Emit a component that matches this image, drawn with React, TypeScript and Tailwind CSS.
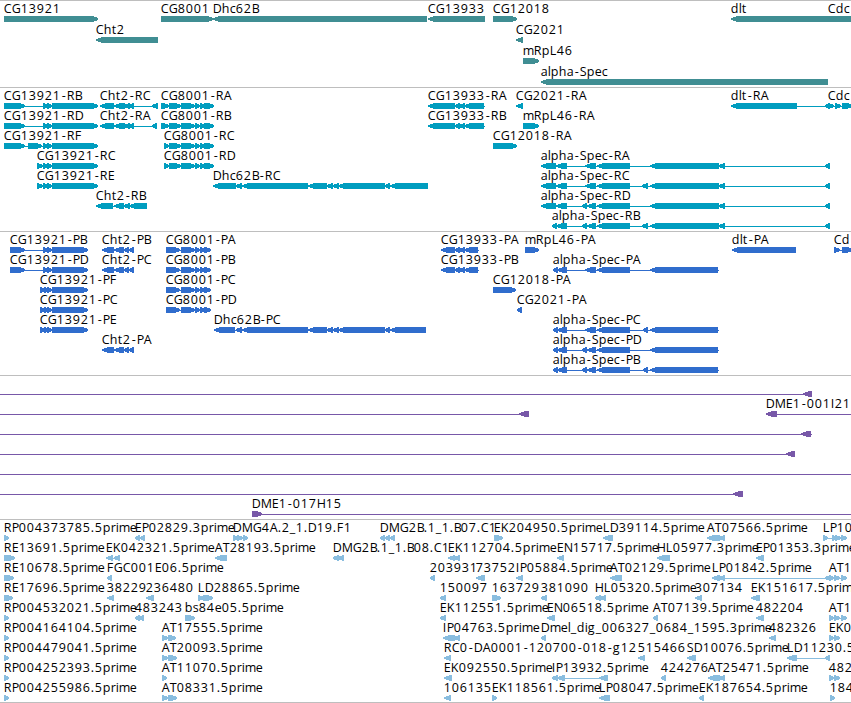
type Span = [number, number]

interface Feature {
    row: number
    x: number
    label: string
    dir: 1 | -1
    spans: Span[]
    // connector line, when it runs past the outer spans
    line?: Span
}

interface TrackData {
    name: string
    color: string
    rowHeight: number
    height: number
    features: Feature[]
}

const WIDTH = 851

// Label advances in px, digits are 8 wide
const ADVANCE: Record<string, number> = {
    A: 8, B: 7, C: 8, D: 9, E: 7, F: 7, G: 9, H: 9, I: 4, K: 8, L: 7, M: 11, N: 9, P: 7, R: 8, S: 7, T: 7,
    a: 7, b: 8, c: 6, d: 8, e: 7, g: 8, h: 8, i: 3, l: 3, m: 11, o: 7, p: 8, r: 5, s: 6, t: 5,
    '.': 4, '-': 6, _: 6
}

const f = (row: number, x: number, label: string, dir: 1 | -1, spans: Span[], line?: Span): Feature => ({
    row,
    x,
    label,
    dir,
    spans,
    line
})

const genes: Feature[] = [
    f(0, 4, 'CG13921', 1, [[4, 98]]),
    f(0, 161, 'CG8001', 1, [[161, 213]]),
    f(0, 213, 'Dhc62B', -1, [[213, 427]]),
    f(0, 428, 'CG13933', -1, [[428, 485]]),
    f(0, 493, 'CG12018', 1, [[493, 517]]),
    f(0, 731, 'dlt', -1, [[731, 829]]),
    f(0, 828, 'Cdc', 1, [[828, 870]]),
    f(1, 96, 'Cht2', -1, [[96, 158]]),
    f(1, 516, 'CG2021', -1, [[516, 523]]),
    f(2, 523, 'mRpL46', 1, [[523, 539]]),
    f(3, 541, 'alpha-Spec', -1, [[541, 828]])
]

const cg13921: Span[] = [[43, 48], [47, 52], [52, 98]]
const cg13921Short: Span[] = [[37, 43], ...cg13921]
const cht2: Span[] = [[100, 114], [114, 125], [124, 130], [129, 134]]
const cg8001: Span[] = [[169, 181], [181, 195], [195, 200], [200, 205], [204, 214]]
const cg13933: Span[] = [[428, 455], [455, 460], [459, 465], [464, 484]]
const dhcMid: Span[] = [[236, 242], [242, 308], [308, 327], [327, 333], [332, 339], [338, 385], [385, 390]]
const specTail: Span[] = [[650, 719], [719, 725], [825, 830]]

const transcripts: Feature[] = [
    f(0, 4, 'CG13921-RB', 1, [[4, 25], ...cg13921]),
    f(0, 100, 'Cht2-RC', -1, [...cht2, [152, 158]]),
    f(0, 161, 'CG8001-RA', 1, [[161, 169], ...cg8001]),
    f(0, 428, 'CG13933-RA', -1, cg13933, [428, 485]),
    f(0, 516, 'CG2021-RA', -1, [[516, 523]]),
    f(0, 731, 'dlt-RA', -1, [[731, 797], [825, 830]]),
    f(0, 828, 'Cdc', 1, [[828, 834], [835, 841], [842, 853]]),
    f(1, 4, 'CG13921-RD', 1, [[4, 25], ...cg13921]),
    f(1, 100, 'Cht2-RA', -1, [...cht2, [152, 157]]),
    f(1, 161, 'CG8001-RB', 1, [[161, 169], ...cg8001]),
    f(1, 428, 'CG13933-RB', -1, cg13933, [428, 485]),
    f(1, 523, 'mRpL46-RA', 1, [[523, 539]]),
    f(2, 4, 'CG13921-RF', 1, [[4, 25], [28, 42], ...cg13921]),
    f(2, 164, 'CG8001-RC', 1, [[164, 169], ...cg8001]),
    f(2, 493, 'CG12018-RA', 1, [[493, 517]]),
    f(3, 37, 'CG13921-RC', 1, cg13921Short),
    f(3, 164, 'CG8001-RD', 1, [[164, 169], ...cg8001]),
    f(3, 541, 'alpha-Spec-RA', -1, [[541, 556], [556, 567], [585, 596], [597, 630], ...specTail]),
    f(4, 37, 'CG13921-RE', 1, cg13921Short),
    f(4, 213, 'Dhc62B-RC', -1, [[213, 236], ...dhcMid, [390, 428]]),
    f(4, 541, 'alpha-Spec-RC', -1, [[541, 556], [556, 567], [585, 596], [597, 630], [642, 648], ...specTail]),
    f(5, 96, 'Cht2-RB', -1, [[96, 113], [114, 124], [124, 130], [129, 147]]),
    f(5, 541, 'alpha-Spec-RD', -1, [[541, 556], [556, 567], [582, 587], [587, 596], [597, 630], ...specTail]),
    f(6, 552, 'alpha-Spec-RB', -1, [[552, 557], [556, 567], [582, 587], [587, 596], [597, 630], [642, 648], ...specTail])
]

const p13921: Span[] = [[43, 48], [47, 52], [52, 88]]
const p13921Short: Span[] = [[40, 45], [44, 48], [47, 52], [52, 88]]
const pCht2: Span[] = [[102, 114], [114, 124], [124, 129], [129, 134]]
const p8001: Span[] = [[166, 180], [181, 195], [195, 200], [200, 205], [204, 211]]
const p13933: Span[] = [[441, 455], [455, 460], [459, 465], [464, 478]]
const specHead: Span[] = [[553, 558], [557, 567]]

const proteins: Feature[] = [
    f(0, 10, 'CG13921-PB', 1, [[10, 25], ...p13921]),
    f(0, 102, 'Cht2-PB', -1, pCht2),
    f(0, 166, 'CG8001-PA', 1, p8001),
    f(0, 441, 'CG13933-PA', -1, p13933, [441, 479]),
    f(0, 525, 'mRpL46-PA', 1, [[525, 539]]),
    f(0, 732, 'dlt-PA', -1, [[732, 796]]),
    f(0, 834, 'Cd', 1, [[834, 840], [842, 853]]),
    f(1, 10, 'CG13921-PD', 1, [[10, 25], ...p13921]),
    f(1, 102, 'Cht2-PC', -1, pCht2),
    f(1, 166, 'CG8001-PB', 1, p8001),
    f(1, 441, 'CG13933-PB', -1, p13933, [441, 479]),
    f(1, 553, 'alpha-Spec-PA', -1, [...specHead, [585, 596], [597, 630], [650, 718]], [553, 719]),
    f(2, 40, 'CG13921-PF', 1, p13921Short),
    f(2, 166, 'CG8001-PC', 1, p8001),
    f(2, 493, 'CG12018-PA', 1, [[493, 516]]),
    f(3, 40, 'CG13921-PC', 1, p13921Short),
    f(3, 166, 'CG8001-PD', 1, p8001),
    f(3, 517, 'CG2021-PA', -1, [[517, 522]]),
    f(4, 40, 'CG13921-PE', 1, p13921Short),
    f(4, 214, 'Dhc62B-PC', -1, [[214, 235], ...dhcMid, [390, 426]]),
    f(4, 553, 'alpha-Spec-PC', -1, [...specHead, [585, 596], [597, 630], [643, 648], [650, 718]], [553, 719]),
    f(5, 102, 'Cht2-PA', -1, pCht2),
    f(5, 553, 'alpha-Spec-PD', -1, [...specHead, [582, 587], [587, 596], [597, 630], [650, 718]], [553, 719]),
    f(6, 553, 'alpha-Spec-PB', -1, [...specHead, [582, 587], [587, 596], [597, 630], [643, 648], [650, 718]], [553, 719])
]

const clones: Feature[] = [
    f(0, 0, '', -1, [[803, 812]], [0, 812]),
    f(1, 0, '', -1, [[519, 529]], [0, 529]),
    f(1, 766, 'DME1-001I21', -1, [[766, 777]], [766, WIDTH]),
    f(2, 0, '', -1, [[801, 811]], [0, 812]),
    f(3, 0, '', -1, [[786, 795]], [0, 795]),
    f(4, 0, '', -1, [], [0, WIDTH]),
    f(5, 0, '', -1, [[733, 743]], [0, 743]),
    f(6, 252, 'DME1-017H15', 1, [[252, 262]], [252, WIDTH])
]

const ests: Feature[] = [
    f(0, 4, 'RP004373785.5prime', 1, [[4, 9]]),
    f(0, 135, 'EP02829.3prime', -1, [[135, 140], [140, 145]]),
    f(0, 233, 'DMG4A.2_1.D19.F1', 1, [[233, 238], [237, 243], [243, 248]]),
    f(0, 380, 'DMG2B.1_1.B07.C1', -1, [[380, 385], [385, 390], [390, 395]]),
    f(0, 494, 'EK204950.5prime', 1, [[494, 503]]),
    f(0, 603, 'LD39114.5prime', -1, [[603, 613]]),
    f(0, 707, 'AT07566.5prime', -1, [[707, 720], [719, 725]]),
    f(0, 823, 'LP10', 1, [[823, 828], [832, 837], [835, 841], [841, 847]]),
    f(1, 4, 'RE13691.5prime', 1, [[4, 15]]),
    f(1, 106, 'EK042321.5prime', -1, [[106, 113], [114, 120]]),
    f(1, 215, 'AT28193.5prime', -1, [[215, 227]]),
    f(1, 333, 'DMG2B.1_1.B08.C1', -1, [[333, 339], [338, 344]]),
    f(1, 448, 'EK112704.5prime', -1, [[448, 455], [454, 460]]),
    f(1, 557, 'EN15717.5prime', -1, [[557, 564]]),
    f(1, 657, 'HL05977.3prime', -1, [[657, 670]]),
    f(1, 756, 'EP01353.3prime', -1, [[756, 764]]),
    f(2, 4, 'RE10678.5prime', 1, [[4, 14]]),
    f(2, 107, 'FGC001E06.5prime', -1, [[107, 112]]),
    f(2, 430, '203931', -1, [[430, 435]]),
    f(2, 476, '73752', -1, [[476, 485]]),
    f(2, 516, 'IP05884.5prime', -1, [[516, 523]]),
    f(2, 610, 'AT02129.5prime', -1, [[610, 622]]),
    f(2, 712, 'LP01842.5prime', -1, [[712, 720], [719, 725], [825, 831]]),
    f(2, 829, 'AT1', 1, [[829, 834], [834, 840], [841, 847]]),
    f(3, 4, 'RE17696.5prime', 1, [[4, 13]]),
    f(3, 107, '38229', -1, [[107, 114]]),
    f(3, 146, '236480', -1, [[146, 154]]),
    f(3, 198, 'LD28865.5prime', 1, [[198, 204], [203, 213]]),
    f(3, 440, '150097', -1, [[440, 446]]),
    f(3, 492, '163729', 1, [[492, 501]]),
    f(3, 541, '381090', -1, [[541, 547]]),
    f(3, 595, 'HL05320.5prime', -1, [[595, 601], [599, 606]]),
    f(3, 695, '307134', -1, [[695, 702]]),
    f(3, 751, 'EK151617.5prim', -1, [[751, 760]]),
    f(4, 4, 'RP004532021.5prime', 1, [[4, 9]]),
    f(4, 135, '483243', -1, [[135, 140], [139, 144]]),
    f(4, 185, 'bs84e05.5prime', 1, [[185, 195]]),
    f(4, 440, 'EK112551.5prime', -1, [[440, 446]]),
    f(4, 547, 'EN06518.5prime', -1, [[547, 555]]),
    f(4, 653, 'AT07139.5prime', -1, [[653, 658]]),
    f(4, 756, '482204', -1, [[756, 764]]),
    f(4, 829, 'AT1', 1, [[829, 834], [834, 840], [841, 847]]),
    f(5, 4, 'RP004164104.5prime', 1, [[4, 9]]),
    f(5, 162, 'AT17555.5prime', 1, [[162, 168], [168, 176]]),
    f(5, 443, 'IP04763.5prime', -1, [[443, 455], [454, 460]]),
    f(5, 541, 'Dmel_dig_006327_0684_1595.3prime', -1, [[541, 546]]),
    f(5, 769, '482326', -1, [[769, 776]]),
    f(5, 829, 'EK0', 1, [[829, 834], [834, 840]]),
    f(6, 4, 'RP004479041.5prime', 1, [[4, 9]]),
    f(6, 162, 'AT20093.5prime', 1, [[162, 168], [168, 177]]),
    f(6, 444, 'RC0-DA0001-120700-018-g12', -1, [[444, 451]]),
    f(6, 638, '515466', -1, [[638, 645]]),
    f(6, 687, 'SD10076.5prime', -1, [[687, 696]]),
    f(6, 787, 'LD11230.5', -1, [[787, 797], [825, 830]]),
    f(7, 4, 'RP004252393.5prime', 1, [[4, 9]]),
    f(7, 162, 'AT11070.5prime', 1, [[162, 167]]),
    f(7, 444, 'EK092550.5prime', -1, [[444, 452]]),
    f(7, 552, 'IP13932.5prime', -1, [[552, 558], [557, 565], [599, 608]]),
    f(7, 661, '424276', -1, [[661, 666]]),
    f(7, 708, 'AT25471.5prime', -1, [[708, 720], [719, 725]]),
    f(7, 829, '482', 1, [[829, 834], [834, 840]]),
    f(8, 4, 'RP004255986.5prime', 1, [[4, 9]]),
    f(8, 162, 'AT08331.5prime', 1, [[162, 168], [168, 177]]),
    f(8, 444, '106135', -1, [[444, 451]]),
    f(8, 492, 'EK118561.5prime', 1, [[492, 497]]),
    f(8, 599, 'LP08047.5prime', -1, [[599, 610]]),
    f(8, 699, 'EK187654.5prime', -1, [[699, 704]]),
    f(8, 830, '184', 1, [[830, 835]])
]

const tracks: TrackData[] = [
    { name: 'Genes', color: '#408e93', rowHeight: 21, height: 87, features: genes },
    { name: 'Transcripts', color: '#009dbf', rowHeight: 20, height: 144, features: transcripts },
    { name: 'Proteins', color: '#306dcd', rowHeight: 20, height: 144, features: proteins },
    { name: 'Clones', color: '#7858a8', rowHeight: 20, height: 144, features: clones },
    { name: 'ESTs', color: '#89bddf', rowHeight: 20, height: 183, features: ests }
]

const glyphPositions = (label: string, x: number) => {
    let pos = x - 0.3
    return Array.from(label).map((ch) => {
        const at = ch === '-' ? pos + 1 : pos
        pos += ADVANCE[ch] ?? 8
        return at
    })
}

// Bar with a blunt two pixel tip, so that short exons stay readable
const arrowPoints = ([start, end]: Span, dir: 1 | -1, top: number) => {
    const head = Math.min(6, end - start - 1)
    const mid = top + 3
    const bottom = top + 6
    if (dir === 1) {
        const neck = end - head
        return `${start},${top} ${neck},${top} ${end},${mid - 1} ${end},${mid + 1} ${neck},${bottom} ${start},${bottom}`
    }
    const neck = start + head
    return `${end},${top} ${neck},${top} ${start},${mid - 1} ${start},${mid + 1} ${neck},${bottom} ${end},${bottom}`
}

const FeatureGlyph = ({ feature, rowHeight }: { feature: Feature; rowHeight: number }) => {
    const { row, x, label, dir, spans } = feature
    const y = row * rowHeight
    const line = feature.line ?? [spans[0][0], spans[spans.length - 1][1]]
    const hasLine = feature.line !== undefined || spans.length > 1

    return (
        <g>
            {hasLine && <rect x={line[0]} y={y + 18} width={line[1] - line[0]} height={1} />}
            {spans.map((span, i) => (
                <polygon key={i} points={arrowPoints(span, dir, y + 15)} />
            ))}
            {label && (
                <text x={glyphPositions(label, x).join(' ')} y={y + 12} className="fill-black">
                    {label}
                </text>
            )}
        </g>
    )
}

const Track = ({ track }: { track: TrackData }) => (
    <section aria-label={track.name} className="border-t border-[#bebebe]">
        <svg
            width={WIDTH}
            height={track.height - 1}
            fill={track.color}
            shapeRendering="crispEdges"
            className="block overflow-hidden text-[12.5px]"
        >
            {track.features.map((feature, i) => (
                <FeatureGlyph key={i} feature={feature} rowHeight={track.rowHeight} />
            ))}
        </svg>
    </section>
)

export default function App() {
    return (
        <main className="h-[703px] w-[851px] overflow-hidden border-b border-[#bebebe] bg-white font-['Open_Sans','Noto_Sans',sans-serif]">
            {tracks.map((track) => (
                <Track key={track.name} track={track} />
            ))}
        </main>
    )
}
